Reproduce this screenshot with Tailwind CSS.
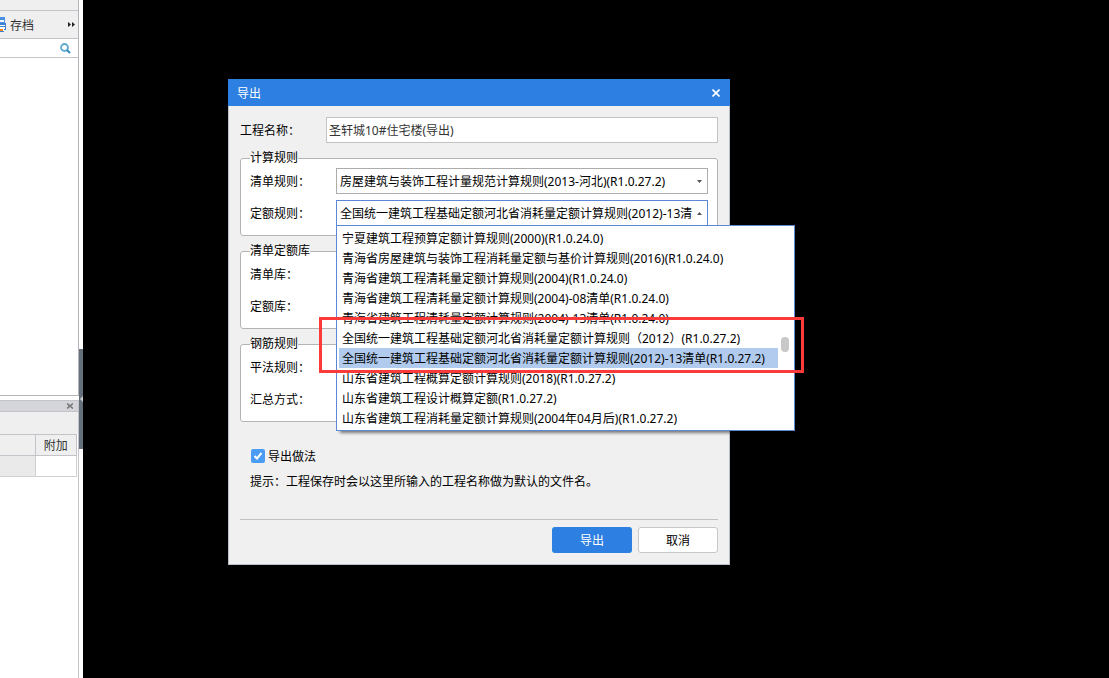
<!DOCTYPE html>
<html lang="zh-CN">
<head>
<meta charset="utf-8">
<title>导出</title>
<script src="https://cdn.jsdelivr.net/npm/@tailwindcss/browser@4"></script>
</head>
<body class="relative flex min-h-screen overflow-hidden bg-black font-['Noto_Sans','Noto_Sans_CJK_SC',sans-serif] text-[12px] leading-5 text-black">

<!-- Docked panels of the main window -->
<aside class="relative flex w-[83px] shrink-0 flex-col bg-white">
  <div class="flex h-[396px] w-[79px] flex-col border-r border-b border-[#b4b4b8]">
    <div class="h-[11px] border-b border-[#c3c3c9] bg-[#efefef]"></div>
    <div class="flex h-7 items-center border-b border-[#c3c3c9] bg-[#efefef] pr-[3px]">
      <button type="button" class="flex items-center gap-1 text-[#333]">
        <svg class="h-[15px] w-[6px]" viewBox="0 0 6 15"><path d="M0 0h5v6H0z" fill="#4a90e2"/><path d="M0 3h4v2H0z" fill="#fff"/><path d="M0 6h6v7H0z" fill="#3f83cf"/><path d="M0 8h5v1H0zM0 10h5v2H0z" fill="#fff"/><path d="M0 11h4v4H0z" fill="#fff"/><path d="M0 12h3v2H0z" fill="#f58220"/><path d="M0 14h4v1H0z" fill="#3f83cf"/></svg>
        <span class="pt-[2px]">存档</span>
      </button>
      <button type="button" aria-label="更多" class="ml-auto">
        <svg class="h-[5px] w-[7px]" viewBox="0 0 7 5"><path d="M0 0l3 2.500L0 5zM4 0l3 2.500L4 5z" fill="#222"/></svg>
      </button>
    </div>
    <div class="flex h-[19px] items-center border-b border-[#c3c3c9] pr-[7px]">
      <input type="text" aria-label="搜索" class="h-full w-0 grow outline-none">
      <button type="button" aria-label="搜索">
        <svg class="h-[11px] w-[11px]" viewBox="0 0 11 11" fill="none"><circle cx="4.500" cy="4.500" r="3.500" stroke="#5fa9cf" stroke-width="1.800"/><path d="M7 7l3 3" stroke="#3a8dbd" stroke-width="2.200"/></svg>
      </button>
    </div>
  </div>
  <div class="mt-1 flex w-[79px] grow flex-col border-r border-[#c3c3c9]">
    <div class="flex h-3 items-center justify-end border-y border-[#c3c3c9] bg-[#d4d5db] pr-[5px]">
      <button type="button" aria-label="关闭面板"><svg class="h-[6px] w-[6px]" viewBox="0 0 6 6"><path d="M0 .500l6 5M6 .500l-6 5" stroke="#777" stroke-width="1.500"/></svg></button>
    </div>
    <div class="h-[22px] bg-[#efefef]"></div>
    <table class="w-[77px] table-fixed border-collapse">
      <tbody>
        <tr class="h-[21px]"><th class="w-[35px] border-y border-r border-[#c3c3c9] bg-[#efefef]"></th><th class="h-[21px] border border-[#c3c3c9] bg-[#efefef] p-0 pt-[2px] text-center leading-[18px] font-normal text-[#333]">附加</th></tr>
        <tr class="h-[21px]"><td class="border-r border-b border-[#d0d0d0] bg-[#eaeaea]"></td><td class="border border-[#d0d0d0] bg-white"></td></tr>
      </tbody>
    </table>
  </div>
  <button type="button" aria-label="收起" class="absolute top-[349px] right-0 flex h-[100px] w-1 items-center justify-end bg-[#64707c]">
    <svg class="h-[6px] w-[3px]" viewBox="0 0 3 6"><path d="M3 0v6L0 3z" fill="#c8ccd0"/></svg>
  </button>
</aside>

<!-- Export dialog -->
<form class="absolute top-[79px] left-[228px] w-[502px] border border-t-0 border-[#b9c0c8] bg-[#f0f0f0] pb-[11px]">
  <header class="-mx-px flex h-[27px] items-center justify-between bg-[#2d80e2] pr-[10px] pl-[9px] text-white">
    <h1 class="pt-[2px]">导出</h1>
    <button type="button" aria-label="关闭"><svg class="h-2 w-2" viewBox="0 0 8 8"><path d="M.500 .500l7 7M7.500 .500l-7 7" stroke="#fff" stroke-width="1.600"/></svg></button>
  </header>

  <div class="px-[11px]">
    <div class="mt-[11px] flex h-[26px] items-center">
      <label for="name" class="w-[86px] shrink-0 pt-[2px]">工程名称：</label>
      <input id="name" type="text" value="圣轩城10#住宅楼(导出)" class="h-full min-w-0 grow border border-[#c3c3c3] bg-white px-[2px] text-[#333] outline-none">
    </div>

    <fieldset class="mt-[5px] rounded-[3px] border border-[#b4b4b4] bg-white px-[9px] pb-[9px]">
      <legend class="h-5">计算规则</legend>
      <div class="flex h-[26px] items-center">
        <label for="bill" class="w-[86px] shrink-0 pt-[2px]">清单规则：</label>
        <div class="relative h-full min-w-0 grow">
          <select id="bill" class="h-full w-full appearance-none overflow-hidden border border-[#adadad] bg-white pt-px pr-[14px] pl-[3px] outline-none"><option>房屋建筑与装饰工程计量规范计算规则(2013-河北)(R1.0.27.2)</option></select>
          <svg class="pointer-events-none absolute top-3 right-[6px] h-[3px] w-[5px]" viewBox="0 0 5 3"><path d="M0 0h5L2.500 3z" fill="#555"/></svg>
        </div>
      </div>
      <div class="mt-[6px] flex h-[26px] items-center">
        <label for="quota" class="w-[86px] shrink-0 pt-[2px]">定额规则：</label>
        <div class="relative h-full min-w-0 grow">
          <select id="quota" class="h-full w-full appearance-none overflow-hidden border border-[#5b87d6] bg-white pt-px pr-[14px] pl-[3px] outline-none"><option>全国统一建筑工程基础定额河北省消耗量定额计算规则(2012)-13清单(R1.0.27.2)</option></select>
          <svg class="pointer-events-none absolute top-3 right-[6px] h-[3px] w-[5px]" viewBox="0 0 5 3"><path d="M0 3h5L2.500 0z" fill="#555"/></svg>
          <!-- Open list of the quota rules -->
          <ul role="listbox" aria-label="定额规则" class="absolute top-[25px] left-0 z-10 w-[459px] border border-[#5b87d6] bg-white py-[2px] pr-4 pl-[2px] leading-[22px] whitespace-nowrap shadow-[3px_3px_3px_-1px_rgba(0,0,0,0.5)]">
            <li role="option" class="h-5 px-[3px]">宁夏建筑工程预算定额计算规则(2000)(R1.0.24.0)</li>
            <li role="option" class="h-5 px-[3px]">青海省房屋建筑与装饰工程消耗量定额与基价计算规则(2016)(R1.0.24.0)</li>
            <li role="option" class="h-5 px-[3px]">青海省建筑工程清耗量定额计算规则(2004)(R1.0.24.0)</li>
            <li role="option" class="h-5 px-[3px]">青海省建筑工程清耗量定额计算规则(2004)-08清单(R1.0.24.0)</li>
            <li role="option" class="h-5 px-[3px]">青海省建筑工程清耗量定额计算规则(2004)-13清单(R1.0.24.0)</li>
            <li role="option" class="h-5 px-[3px]">全国统一建筑工程基础定额河北省消耗量定额计算规则（2012）(R1.0.27.2)</li>
            <li role="option" aria-selected="true" class="h-5 bg-[#b0cbee] px-[3px]">全国统一建筑工程基础定额河北省消耗量定额计算规则(2012)-13清单(R1.0.27.2)</li>
            <li role="option" class="h-5 px-[3px]">山东省建筑工程概算定额计算规则(2018)(R1.0.27.2)</li>
            <li role="option" class="h-5 px-[3px]">山东省建筑工程设计概算定额(R1.0.27.2)</li>
            <li role="option" class="h-5 px-[3px]">山东省建筑工程消耗量定额计算规则(2004年04月后)(R1.0.27.2)</li>
            <li aria-hidden="true" class="absolute top-[111px] right-[5px] h-[15px] w-2 rounded-full bg-[#c8c8c8]"></li>
          </ul>
          <div class="absolute top-[117px] -left-[17px] z-20 h-[56px] w-[485px] border-[3px] border-[#fc3a3a]"></div>
        </div>
      </div>
    </fieldset>

    <fieldset class="mt-[5px] rounded-[3px] border border-[#b4b4b4] bg-white px-[9px] pb-[9px]">
      <legend class="h-5">清单定额库</legend>
      <div class="flex h-[26px] items-center"><label for="billdb" class="w-[86px] shrink-0 pt-[2px]">清单库：</label><select id="billdb" class="h-full min-w-0 grow appearance-none border border-[#adadad] bg-white"></select></div>
      <div class="mt-[6px] flex h-[26px] items-center"><label for="quotadb" class="w-[86px] shrink-0 pt-[2px]">定额库：</label><select id="quotadb" class="h-full min-w-0 grow appearance-none border border-[#adadad] bg-white"></select></div>
    </fieldset>

    <fieldset class="mt-[5px] rounded-[3px] border border-[#b4b4b4] bg-white px-[9px] pb-[9px]">
      <legend class="h-5">钢筋规则</legend>
      <div class="flex h-[26px] items-center"><label for="rebar" class="w-[86px] shrink-0 pt-[2px]">平法规则：</label><select id="rebar" class="h-full min-w-0 grow appearance-none border border-[#adadad] bg-white"></select></div>
      <div class="mt-[6px] flex h-[26px] items-center"><label for="sum" class="w-[86px] shrink-0 pt-[2px]">汇总方式：</label><select id="sum" class="h-full min-w-0 grow appearance-none border border-[#adadad] bg-white"></select></div>
    </fieldset>

    <div class="mt-[23px] pl-[10px]">
      <label class="relative flex items-center gap-[3px] pl-px">
        <input type="checkbox" checked class="h-[14px] w-[14px] appearance-none rounded-[2px] bg-[#4a9cf5]">
        <svg class="pointer-events-none absolute left-1 h-2 w-2" viewBox="0 0 8 8" fill="none"><path d="M.500 4l2.500 2.500L7.500 1" stroke="#fff" stroke-width="2"/></svg>
        <span class="pt-[2px]">导出做法</span>
      </label>
      <p class="mt-[5px]">提示：工程保存时会以这里所输入的工程名称做为默认的文件名。</p>
    </div>

    <div class="mt-[27px] flex justify-end gap-[6px] border-t border-[#c0c0c0] pt-[7px]">
      <button type="submit" class="h-[26px] w-20 rounded-[3px] bg-[#2d80e2] pt-[2px] text-white">导出</button>
      <button type="button" class="h-[26px] w-20 rounded-[3px] border border-[#c8c8c8] bg-white pt-[2px]">取消</button>
    </div>
  </div>
</form>
</body>
</html>
